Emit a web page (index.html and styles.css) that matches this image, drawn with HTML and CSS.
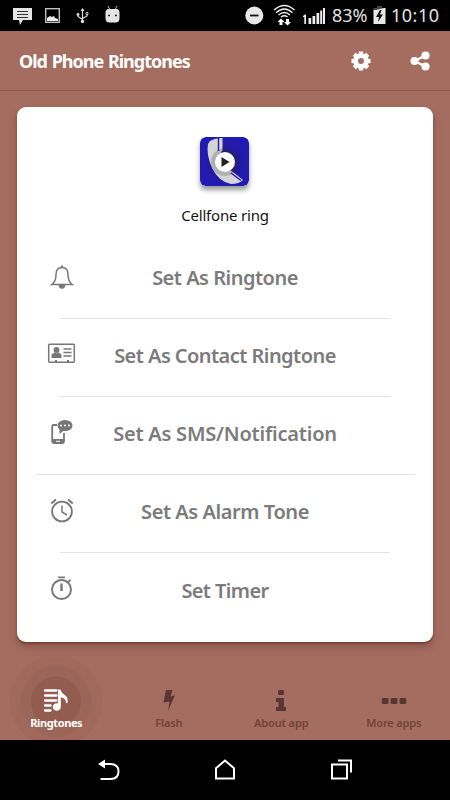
FILE: index.html
```html
<!DOCTYPE html>
<html lang="en">
<head>
<meta charset="utf-8">
<title>Old Phone Ringtones</title>
<link rel="stylesheet" href="styles.css">
</head>
<body>
<div class="screen">
  <header class="status">
    <svg class="status-left" width="124" height="31" viewBox="0 0 124 31">
      <path fill="#e4e4e4" d="M13 8h19v12h-9l-3 5-1-5h-6z"/>
      <path stroke="#333" d="M17 11.500h11M17 14.500h11M17 17.500h11"/>
      <rect x="45.700" y="8.700" width="13.600" height="13.600" fill="none" stroke="#ccc" stroke-width="1.300"/>
      <path fill="#eee" d="M47 21v-3l3-2 2 1 2-1 1 2 3 1v2z"/>
      <g fill="none" stroke="#ddd" stroke-width="1.200"><path d="M82.500 9v12M78 14v2.500l4.500 3M87 14v2l-4.500 2.500"/></g>
      <path fill="#ddd" d="M80.500 11l2-3 2 3z"/><circle cx="82.500" cy="21.500" r="1.700" fill="#ddd"/><circle cx="78" cy="14.500" r="1.400" fill="#ddd"/><circle cx="87" cy="13.500" r="1.100" fill="none" stroke="#ddd"/>
      <path stroke="#bbb" d="M108 6l2 4M117 6l-2 4"/>
      <path fill="#e4e4e4" d="M105.500 13q0-4 3-4h8q3 0 3 4v5q0 4.500-4 4.500h-6q-4 0-4-4.500z"/>
      <path stroke="#222" stroke-width="1.300" d="M108 15.500h2M115 15.500h2"/>
    </svg>
    <div class="status-right">
      <svg width="84" height="31" viewBox="245 0 84 31">
        <circle cx="254.300" cy="15.500" r="9" fill="#e8e8e8"/><path stroke="#111" stroke-width="1.800" d="M250 15.500h8.500"/>
        <g fill="none" stroke="#eee" stroke-width="1.300"><path d="M274 10q10.500-9 20.500 0M276 12.700q8.500-7.500 16.500 0M278.500 15q6-5 11.500 0M281 17q3.500-2.500 6.500 0"/></g>
        <path fill="#fff" d="M281 18.500l3.500 3.500h-2v3h-3v-3h-2zM286 19h3v3h2l-3.500 3.500-3.500-3.500h2z"/>
        <path fill="#eee" d="M303 16l2-1.500h1V24h-1.700v-7H303zM308.500 18h2.700v6h-2.700zM312.500 16h2.700v8h-2.700zM316.500 13h2.700v11h-2.700zM320.200 10.500h2V24h-2zM323 8h2v16h-2z"/>
      </svg>
      <span class="percent">83%</span>
      <svg class="battery" width="13" height="19" viewBox="0 0 13 19"><path fill="#444" d="M4 0h5v2h3.500v4H.5V2H4z"/><path fill="#e8e8e8" d="M.5 4H3l8-2h1.500v16H.5z"/><path fill="#111" d="M7 4L3 11h3l-1 5 5-7.500H7L8.500 4z"/></svg>
      <span class="clock">10:10</span>
    </div>
  </header>

  <div class="appbar">
    <h1>Old Phone Ringtones</h1>
    <svg class="gear" width="20" height="20" viewBox="0 0 20 20"><g fill="#fff"><circle cx="10" cy="10" r="7.600"/><g id="t"><path d="M8 .5h4l.8 4H7.200zM8 19.500h4l.8-4H7.200zM.5 8v4l4 .8V7.200zM19.500 8v4l-4 .8V7.200z"/></g><use href="#t" transform="rotate(45 10 10)"/></g><circle cx="10" cy="10" r="3" fill="#a56d60"/></svg>
    <svg class="share" width="20" height="20" viewBox="0 0 20 20"><path d="M4.500 10l11-5.500M4.500 10l11 5.500" stroke="#fff" stroke-width="2.500"/><g fill="#fff"><circle cx="4.500" cy="10" r="4"/><circle cx="15.500" cy="4.500" r="4.100"/><circle cx="15.500" cy="15.500" r="4.100"/></g></svg>
  </div>

  <main class="card">
    <div class="hero">
      <svg class="cover" width="49" height="49" viewBox="0 0 49 49">
        <defs><clipPath id="c"><rect width="49" height="49" rx="5.500"/></clipPath></defs>
        <g clip-path="url(#c)">
          <rect width="49" height="49" fill="#211bb5"/>
          <circle cx="25" cy="25" r="23" fill="#241bad"/><circle cx="25" cy="25" r="18.500" fill="#221aa2"/><circle cx="25" cy="25" r="14" fill="#201994"/>
          <path fill="#d5d5d7" d="M10 4q5-3 12.500-3v12.500q-4 3-1.500 10 4 9 10 10l12 9.500q-4 4-12 4Q19 45 12 31 6 17 8 7z"/>
          <path fill="none" stroke="#211b9d" stroke-width="1.400" d="M18.500 1v13M31 36l10 7.500"/>
          <circle cx="25" cy="25" r="14" fill="#333" opacity=".22"/>
        </g>
        <circle cx="25" cy="25" r="10" fill="#fff"/><path fill="#222" d="M21.500 20l8 5-8 5z"/>
      </svg>
      <p>Cellfone ring</p>
    </div>
    <ul class="options">
      <li>
        <svg width="30" height="30" viewBox="0 0 30 30" fill="none" stroke="#777" stroke-width="1.500"><path d="M4.800 22.500q4.200-3 4.200-10 0-7 6-7t6 7q0 7 4.200 10z"/><path d="M12.500 23q0 3 2.500 3t2.500-3z" fill="#777"/><path d="M15 3.500v2" stroke-width="2"/></svg>
        <span class="a">Set As Ringtone</span>
      </li>
      <li>
        <svg width="30" height="30" viewBox="0 0 30 30"><rect x="1.700" y="4.200" width="25.600" height="18" rx="1" fill="none" stroke="#777" stroke-width="1.500"/><circle cx="9.500" cy="10" r="2.900" fill="#777"/><path fill="#777" d="M4.500 18v-3.500l3-2 2 1 2-1 3 2V18zM8 20h2v2H8zM20 20h2v2h-2z"/><path stroke="#777" stroke-width="1.300" d="M16.500 9h8M16.500 12.500h8M16.500 16h8"/></svg>
        <span class="b">Set As Contact Ringtone</span>
      </li>
      <li class="wide">
        <svg width="30" height="30" viewBox="0 0 30 30"><path fill="none" stroke="#777" stroke-width="1.800" d="M10 6H6.500q-1.300 0-1.300 1.500v15q0 1.500 1.500 1.500h8.800q1.500 0 1.500-1.500V14"/><path fill="#777" d="M5 20h12v4H5z"/><path stroke="#fff" d="M9 22.300h4"/><ellipse cx="18" cy="6.500" rx="7.500" ry="5.500" fill="#777"/><path fill="#777" d="M12.500 9v6l5-4z"/><g fill="#fff"><circle cx="14" cy="6.500" r="1"/><circle cx="18" cy="6.500" r="1"/><circle cx="22" cy="6.500" r="1"/></g></svg>
        <span class="c">Set As SMS/Notification</span>
      </li>
      <li>
        <svg width="30" height="30" viewBox="0 0 30 30" fill="none" stroke="#777" stroke-width="1.800"><circle cx="15" cy="15.500" r="9.900"/><path stroke-width="1.500" d="M15 9.500v6.500l5 3"/><path stroke-width="2" d="M4.300 7.500l4.700-4M25.700 7.500L21 3.500"/></svg>
        <span class="d">Set As Alarm Tone</span>
      </li>
      <li>
        <svg width="30" height="30" viewBox="0 0 30 30" fill="none" stroke="#777" stroke-width="1.900"><circle cx="14.500" cy="15.500" r="9.500"/><path d="M11.200 3.400h6.700M20.500 8.500l3-2.500"/><path stroke-width="2.400" d="M14.500 9.500v7.500"/></svg>
        <span class="e">Set Timer</span>
      </li>
    </ul>
  </main>

  <nav class="tabs">
    <div class="tab active">
      <svg class="rings" width="94" height="83" viewBox="0 0 94 83"><g fill="#8a554b"><circle cx="47" cy="44.500" r="46" opacity=".16"/><circle cx="47" cy="44.500" r="35.500" opacity=".18"/><circle cx="47" cy="44.500" r="25" opacity=".52"/></g></svg>
      <svg width="26" height="26" viewBox="0 0 26 26"><path stroke="#fff" stroke-width="2.300" stroke-linecap="round" d="M2 3.500h11.500M2 8.500h11.500M2 13.500h11.500M2 18.500h5.500M2 23.500h5.500"/><path fill="#fff" d="M15 2.500h2.300q1 3.500 4.500 5.500 3.800 2.500 2.500 8.300l-1.300-.3q.2-4.500-5.200-5.700V20a4 3.700 0 1 1-2.800-3.500z"/></svg>
      <span>Ringtones</span>
    </div>
    <div class="tab flash">
      <svg width="26" height="26" viewBox="0 0 26 26"><path fill="#563731" d="M10 3h6.500l-2 6.500 4.500-1.300L12 24l1.500-9.500-6 1z"/></svg>
      <span>Flash</span>
    </div>
    <div class="tab about">
      <svg width="26" height="26" viewBox="0 0 26 26"><g fill="#563731"><rect x="10" y="3" width="6" height="5" rx="1.200"/><path d="M8 11h8v9h2v4H8v-4h2.500v-5H8z"/></g></svg>
      <span>About app</span>
    </div>
    <div class="tab more">
      <svg width="26" height="26" viewBox="0 0 26 26"><g fill="#563731"><rect x=".8" y="11" width="6.700" height="6" rx="1.300"/><rect x="9.700" y="11" width="6.700" height="6" rx="1.300"/><rect x="18.600" y="11" width="6.700" height="6" rx="1.300"/></g></svg>
      <span>More apps</span>
    </div>
  </nav>

  <footer class="softkeys">
    <svg width="24" height="24" viewBox="0 0 24 24"><path fill="none" stroke="#fff" stroke-width="2" d="M5 6h8.500q8 0 8 7.500t-8 7.500H3.500"/><path fill="#fff" d="M1 6l7-4.500v9z"/></svg>
    <svg width="24" height="24" viewBox="0 0 24 24"><path fill="none" stroke="#fff" stroke-width="2" d="M3 20.500V10.300L12 2.500l9 7.800v10.200z"/></svg>
    <svg width="24" height="24" viewBox="0 0 24 24"><path fill="none" stroke="#fff" stroke-width="2" d="M3 6.500h15v14H3zM9 2.500h13v12"/></svg>
  </footer>
</div>
</body>
</html>
```

FILE: styles.css
```css
* { box-sizing: border-box; }
body { margin: 0; font-family: "Noto Sans", sans-serif; }
svg { display: block; flex: none; }
.screen {
  width: 450px;
  height: 800px;
  display: flex;
  flex-direction: column;
  background: #a56d60;
  overflow: hidden;
}
.status {
  height: 31px;
  flex: none;
  display: flex;
  justify-content: space-between;
  background: #000;
}
.status-right {
  display: flex;
  width: 205px;
  align-items: center;
  color: #e2e2e2;
  font-size: 18px;
  line-height: 31px;
  white-space: nowrap;
}
.percent { width: 38px; margin-left: 3px; }
.battery { margin-left: 3px; }
.clock { margin-left: 5px; letter-spacing: .5px; }
.appbar {
  height: 60px;
  flex: none;
  display: flex;
  align-items: center;
  padding: 0 20px 0 19px;
  border-bottom: 1px solid #8f5b4f;
  color: #fff;
}
.appbar h1 {
  flex: 1;
  margin: 0;
  font-size: 18px;
  font-weight: 700;
  letter-spacing: -1px;
  word-spacing: 1px;
  white-space: nowrap;
}
.share { margin-left: 39px; }
.card {
  width: 416px;
  height: 535px;
  flex: none;
  margin: 16px 17px 0;
  border-radius: 9px;
  background: #fff;
  box-shadow: 0 2px 2px rgba(95, 35, 25, .45), 0 5px 9px rgba(80, 35, 25, .3);
}
.hero {
  height: 134px;
  padding-top: 30px;
  display: flex;
  flex-direction: column;
  align-items: center;
}
.cover { margin-right: 1px; border-radius: 6px; box-shadow: 0 4px 5px rgba(0, 0, 0, .4); }
.hero p { margin: 17px 0 0; font-size: 15px; line-height: 24px; letter-spacing: -.2px; color: #151515; }
.options { list-style: none; margin: 0; padding: 0 43px; }
.options li {
  height: 78px;
  display: flex;
  align-items: center;
  padding-bottom: 4px;
  border-bottom: 1px solid #e2e2e2;
}
.options li:last-child { border: 0; }
.options li.wide { margin: 0 -24px; padding: 0 24px 4px; }
.options li svg { margin: 0 -17px 2px -13px; }
.options .wide svg { margin-bottom: -1px; }
.options span {
  flex: 1;
  text-align: center;
  font-size: 20px;
  font-weight: 600;
  color: #7b7b7b;
  white-space: nowrap;
}
.options .a { letter-spacing: -.5px; }
.options .b { letter-spacing: -.55px; }
.options .c { letter-spacing: -.22px; }
.options .d { letter-spacing: -.43px; }
.options .e { letter-spacing: -.6px; }
.tabs { flex: none; height: 98px; display: flex; }
.tab {
  width: 112.5px;
  display: flex;
  flex-direction: column;
  align-items: center;
  padding-top: 45px;
  position: relative;
  color: #714239;
  font-size: 11px;
  font-weight: 600;
  line-height: 16px;
}
.tab span { margin-top: 2px; position: relative; white-space: nowrap; letter-spacing: -.15px; }
.active { color: #fff; }
.active span { font-weight: 700; letter-spacing: -.4px; }
.active svg { position: relative; }
.active .rings { position: absolute; top: 15px; left: 9px; }
.softkeys {
  height: 60px;
  flex: none;
  display: flex;
  justify-content: center;
  align-items: center;
  gap: 92px;
  background: #000;
}
```
